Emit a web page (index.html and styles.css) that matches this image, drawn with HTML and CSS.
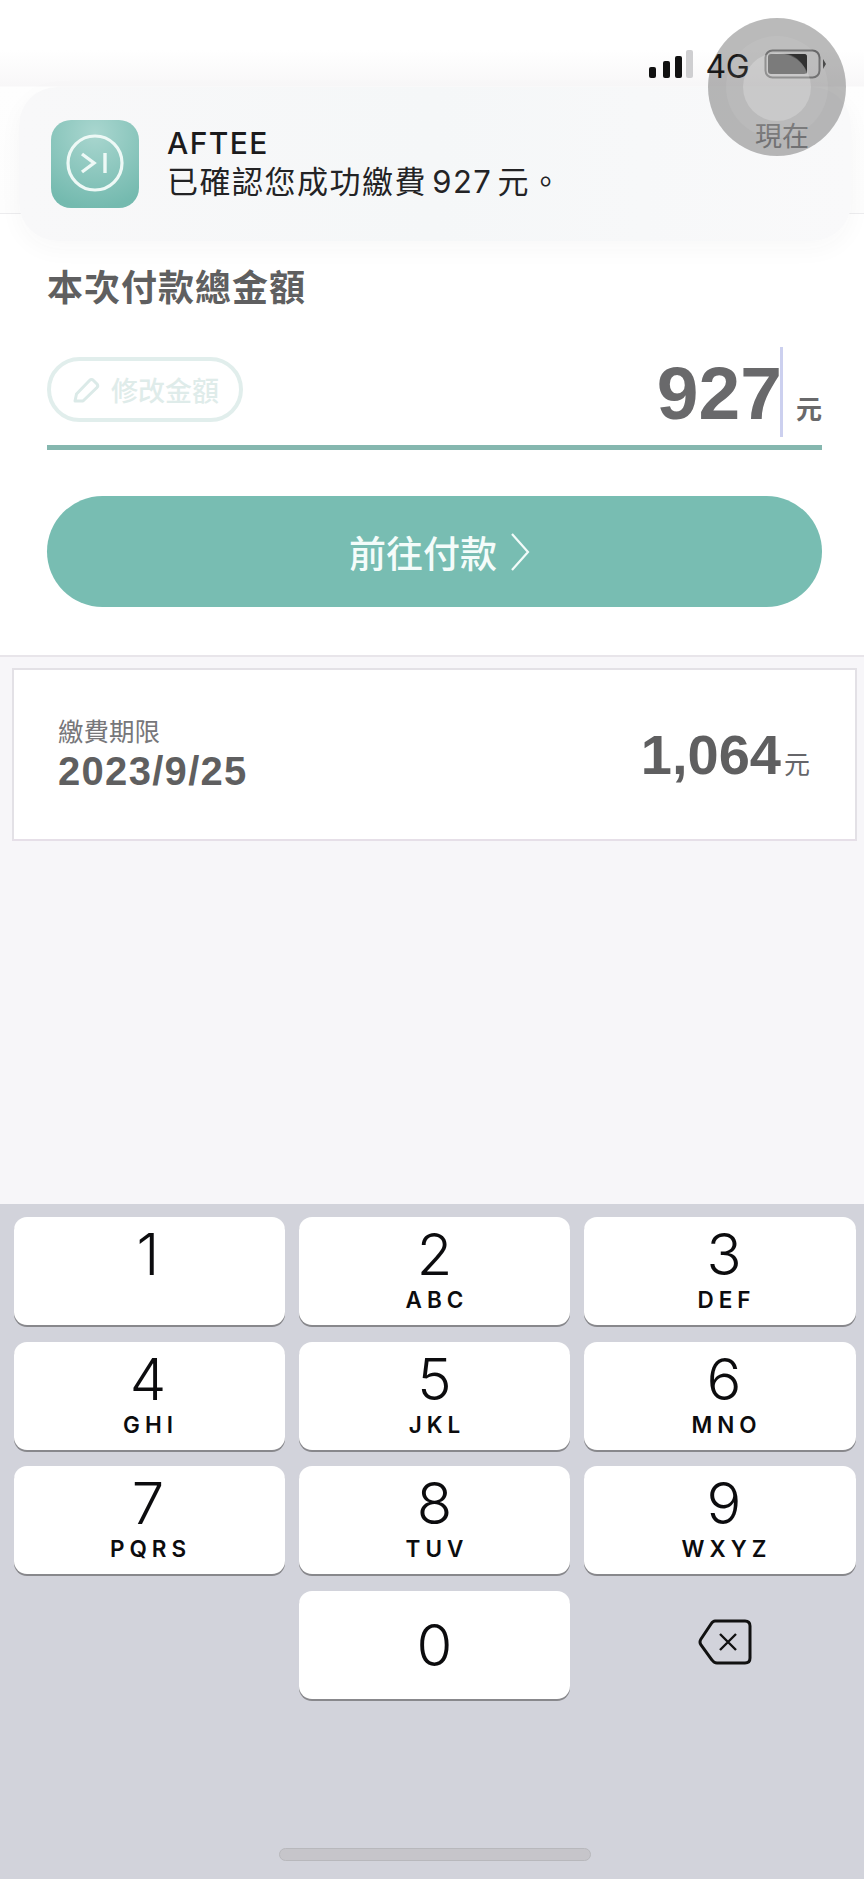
FILE: index.html
```html
<!DOCTYPE html>
<html lang="zh-Hant">
<head>
    <meta charset="UTF-8">
    <meta name="viewport" content="width=device-width, initial-scale=1.0">
    <title>AFTEE - 本次付款</title>
    <link rel="stylesheet" href="styles.css">
</head>
<body>
    <header class="top">
        <div class="status">
            <svg class="signal" width="44" height="28" viewBox="0 0 44 28">
                <rect x="0" y="17" width="7" height="11" rx="2" fill="#111"/>
                <rect x="14" y="11" width="7" height="17" rx="2" fill="#111"/>
                <rect x="26" y="6" width="7" height="22" rx="2" fill="#111"/>
                <rect x="37" y="0" width="7" height="28" rx="2" fill="#cfcfd1"/>
            </svg>
            <span class="network">4G</span>
            <svg class="battery" width="62" height="30" viewBox="0 0 62 30">
                <rect x="1.5" y="1.5" width="54" height="27" rx="7" fill="none" stroke="#8f8f90" stroke-width="2"/>
                <rect x="4" y="5" width="39" height="20" rx="3" fill="#666"/>
                <path d="M24 5H40Q43 5 43 8V25C40 15 34 8 24 5Z" fill="#2f2f2f"/>
                <path d="M59 10L62 15L59 20Z" fill="#666"/>
            </svg>
        </div>
    </header>

    <section class="pay">
        <h1 class="pay-title">本次付款總金額</h1>
        <div class="amount-row">
            <button class="edit-btn">
                <svg width="27" height="26" viewBox="0 0 27 26">
                    <path d="M2 24L3.5 17L16.5 3.5Q18.5 1.5 20.5 3.5L24 7Q25.5 9 24 10.5L10 24Z" fill="none" stroke="#dbeae8" stroke-width="3" stroke-linejoin="round"/>
                </svg>
                修改金額
            </button>
            <div class="amount">
                <span class="amount-num">927</span>
                <span class="caret"></span>
                <span class="amount-unit">元</span>
            </div>
        </div>
        <button class="go-btn">
            前往付款
            <svg width="20" height="38" viewBox="0 0 20 38">
                <path d="M2 1L18 19L2 37" fill="none" stroke="#f2fbf9" stroke-width="2.2"/>
            </svg>
        </button>
    </section>

    <section class="bills">
        <div class="bill-card">
            <div>
                <div class="bill-label">繳費期限</div>
                <div class="bill-date">2023/9/25</div>
            </div>
            <div class="bill-total"><span class="bill-num">1,064</span><span class="bill-unit">元</span></div>
        </div>
    </section>

    <section class="keyboard">
        <div class="keys">
            <div class="key"><span class="digit">1</span></div>
            <div class="key"><span class="digit">2</span><span class="letters">ABC</span></div>
            <div class="key"><span class="digit">3</span><span class="letters">DEF</span></div>
            <div class="key"><span class="digit">4</span><span class="letters">GHI</span></div>
            <div class="key"><span class="digit">5</span><span class="letters">JKL</span></div>
            <div class="key"><span class="digit">6</span><span class="letters">MNO</span></div>
            <div class="key"><span class="digit">7</span><span class="letters">PQRS</span></div>
            <div class="key"><span class="digit">8</span><span class="letters">TUV</span></div>
            <div class="key"><span class="digit">9</span><span class="letters">WXYZ</span></div>
            <div class="key-blank"></div>
            <div class="key key-zero"><span class="digit">0</span></div>
            <div class="key-blank key-back">
                <svg width="54" height="46" viewBox="0 0 54 46">
                    <path d="M17 2H47Q52 2 52 7V39Q52 44 47 44H19Q16 44 14 41L3 26Q1 23 3 20L13 5Q15 2 17 2Z" fill="none" stroke="#111" stroke-width="3"/>
                    <path d="M22 15L38 31M38 15L22 31" fill="none" stroke="#111" stroke-width="2.4"/>
                </svg>
            </div>
        </div>
        <div class="home-bar"></div>
    </section>

    <!-- notification banner, lies over the page -->
    <div class="notice">
        <svg class="app-icon" width="88" height="88" viewBox="0 0 88 88">
            <defs>
                <radialGradient id="iconBg" cx="50%" cy="15%" r="85%">
                    <stop offset="0" stop-color="#a9d6cf"/>
                    <stop offset="1" stop-color="#74baaf"/>
                </radialGradient>
            </defs>
            <rect width="88" height="88" rx="20" fill="url(#iconBg)"/>
            <circle cx="44" cy="43" r="27" fill="none" stroke="#eef9f6" stroke-width="3.2"/>
            <path d="M31 34L43 43L31 52" fill="none" stroke="#eef9f6" stroke-width="3.4"/>
            <path d="M54 33V53" stroke="#eef9f6" stroke-width="3.4"/>
        </svg>
        <div class="notice-text">
            <div class="notice-app">AFTEE</div>
            <div class="notice-msg">已確認您成功繳費 927 元。</div>
        </div>
        <span class="notice-time">現在</span>
    </div>

    <!-- touch indicator from the screen recording -->
    <div class="touch"><div class="touch-mid"><div class="touch-in"></div></div></div>
</body>
</html>
```

FILE: styles.css
```css
* {
    box-sizing: border-box;
}
body {
    margin: 0;
    width: 864px;
    height: 1879px;
    overflow: hidden;
    position: relative;
    display: flex;
    flex-direction: column;
    font-family: 'Liberation Sans', 'Noto Sans CJK TC', sans-serif;
    background-color: #f7f6f9;
}
.top {
    height: 214px;
    flex: none;
    border-bottom: 1px solid #ececee;
    background: linear-gradient(to bottom, #fff 0, #fff 50px, #f8f7f8 86px, #fefefe 87px, #fdfdfd 100%);
}
.status {
    display: flex;
    justify-content: flex-end;
    align-items: flex-start;
    padding: 49px 38px 0 0;
}
.signal {
    margin: 1px 12px 0 0;
}
.network {
    font-family: Inter, sans-serif;
    font-size: 32px;
    line-height: 36px;
    color: #222;
    margin-right: 15px;
    letter-spacing: -0.5px;
}
.pay {
    height: 443px;
    flex: none;
    padding: 53px 42px 0 47px;
    background-color: #fff;
    border-bottom: 2px solid #e8e5ea;
}
.pay-title {
    margin: 0;
    font-size: 36px;
    line-height: 44px;
    font-weight: 700;
    letter-spacing: 1px;
    color: #5f5f60;
}
.amount-row {
    display: flex;
    justify-content: space-between;
    height: 103px;
    margin-top: 36px;
    border-bottom: 5px solid #85b7af;
}
.edit-btn {
    display: flex;
    align-items: center;
    gap: 11px;
    height: 65px;
    width: 196px;
    margin-top: 10px;
    padding: 0 0 0 22px;
    font-family: inherit;
    font-size: 27px;
    font-weight: 500;
    color: #dfecea;
    background: none;
    border: 4px solid #e1eeec;
    border-radius: 33px;
}
.amount {
    display: flex;
    align-items: baseline;
    height: 90px;
    color: #69696b;
}
.amount-num {
    font-size: 75px;
    line-height: 92px;
    font-weight: 700;
}
.caret {
    align-self: flex-start;
    width: 3px;
    height: 90px;
    margin-left: -2px;
    background-color: #ccd0ef;
}
.amount-unit {
    margin-left: 13px;
    font-size: 26px;
    font-weight: 700;
}
.go-btn {
    display: flex;
    justify-content: center;
    align-items: center;
    gap: 13px;
    width: 775px;
    height: 111px;
    margin-top: 46px;
    padding: 0 0 0 10px;
    font-family: inherit;
    font-size: 37px;
    font-weight: 500;
    color: #f4fcfa;
    background-color: #78bdb2;
    border: none;
    border-radius: 56px;
}
.bills {
    flex: 1;
    padding: 11px 7px 0 12px;
}
.bill-card {
    display: flex;
    justify-content: space-between;
    align-items: center;
    height: 173px;
    padding: 0 45px 0 44px;
    background-color: #fff;
    border: 2px solid #e3e1e6;
    border-bottom-color: #e6dfe8;
}
.bill-label {
    font-size: 25.5px;
    line-height: 32px;
    color: #77777a;
}
.bill-date {
    margin-top: 1px;
    font-size: 40px;
    line-height: 44px;
    font-weight: 700;
    letter-spacing: 1.3px;
    color: #5f5f60;
}
.bill-total {
    display: flex;
    align-items: baseline;
    color: #5f5f60;
}
.bill-num {
    font-size: 56px;
    font-weight: 700;
}
.bill-unit {
    margin-left: 3px;
    font-size: 26px;
    color: #66666a;
}
.keyboard {
    height: 675px;
    flex: none;
    display: flex;
    flex-direction: column;
    padding: 13px 8px 0 14px;
    background-color: #d2d3db;
}
.keys {
    display: grid;
    grid-template-columns: 271px 271px 272px;
    grid-auto-rows: 108px;
    column-gap: 14px;
    row-gap: 16.67px;
}
.key {
    display: flex;
    flex-direction: column;
    align-items: center;
    padding-top: 8px;
    font-family: Inter, sans-serif;
    color: #0c0c0e;
    background-color: #fff;
    border-radius: 13px;
    box-shadow: 0 2px 0 #88888c;
}
.key:nth-child(3n+1) {
    padding-right: 3px;
}
.key:nth-child(3n) {
    padding-left: 8px;
}
.key-zero {
    justify-content: center;
    padding-top: 0;
}
.key-back {
    display: flex;
    justify-content: center;
    align-items: center;
    padding: 0 0 6px 10px;
}
.digit {
    font-size: 58px;
    line-height: 58px;
    font-weight: 300;
}
.letters {
    margin-top: 5px;
    margin-right: -5px;
    font-size: 22.5px;
    line-height: 24px;
    font-weight: 600;
    letter-spacing: 5px;
}
.home-bar {
    align-self: center;
    width: 312px;
    height: 13px;
    margin: auto 0 18px 0;
    background-color: #c6c5ca;
    border: 1px solid #b8b8bc;
    border-radius: 7px;
}
.notice {
    position: absolute;
    left: 19px;
    top: 87px;
    width: 832px;
    height: 154px;
    display: flex;
    align-items: center;
    gap: 28px;
    padding: 0 0 0 32px;
    background: linear-gradient(to right, #f8f8f9, #f5f7f8 50%, #f9f9fa);
    border-radius: 38px;
    box-shadow: 0 8px 24px rgba(60, 60, 70, 0.035);
}
.notice-app {
    margin-bottom: 4px;
    font-family: Inter, 'Noto Sans CJK TC', sans-serif;
    font-size: 30px;
    line-height: 32px;
    font-weight: 500;
    letter-spacing: 1.4px;
    color: #1b1b1d;
}
.notice-msg {
    font-family: Inter, 'Noto Sans CJK TC', sans-serif;
    font-size: 31px;
    line-height: 38px;
    letter-spacing: 1.5px;
    word-spacing: -5px;
    color: #232325;
}
.notice-time {
    position: absolute;
    right: 42px;
    top: 33px;
    font-size: 27px;
    line-height: 34px;
    color: #9c9c9e;
}
.touch {
    position: absolute;
    left: 708px;
    top: 18px;
    width: 138px;
    height: 138px;
    display: flex;
    justify-content: center;
    align-items: center;
    border-radius: 50%;
    background-color: rgba(0, 0, 0, 0.27);
    pointer-events: none;
}
.touch-mid {
    width: 102px;
    height: 102px;
    display: flex;
    justify-content: center;
    align-items: center;
    border-radius: 50%;
    background-color: rgba(255, 255, 255, 0.07);
}
.touch-in {
    width: 68px;
    height: 68px;
    border-radius: 50%;
    background-color: rgba(255, 255, 255, 0.22);
}
```
